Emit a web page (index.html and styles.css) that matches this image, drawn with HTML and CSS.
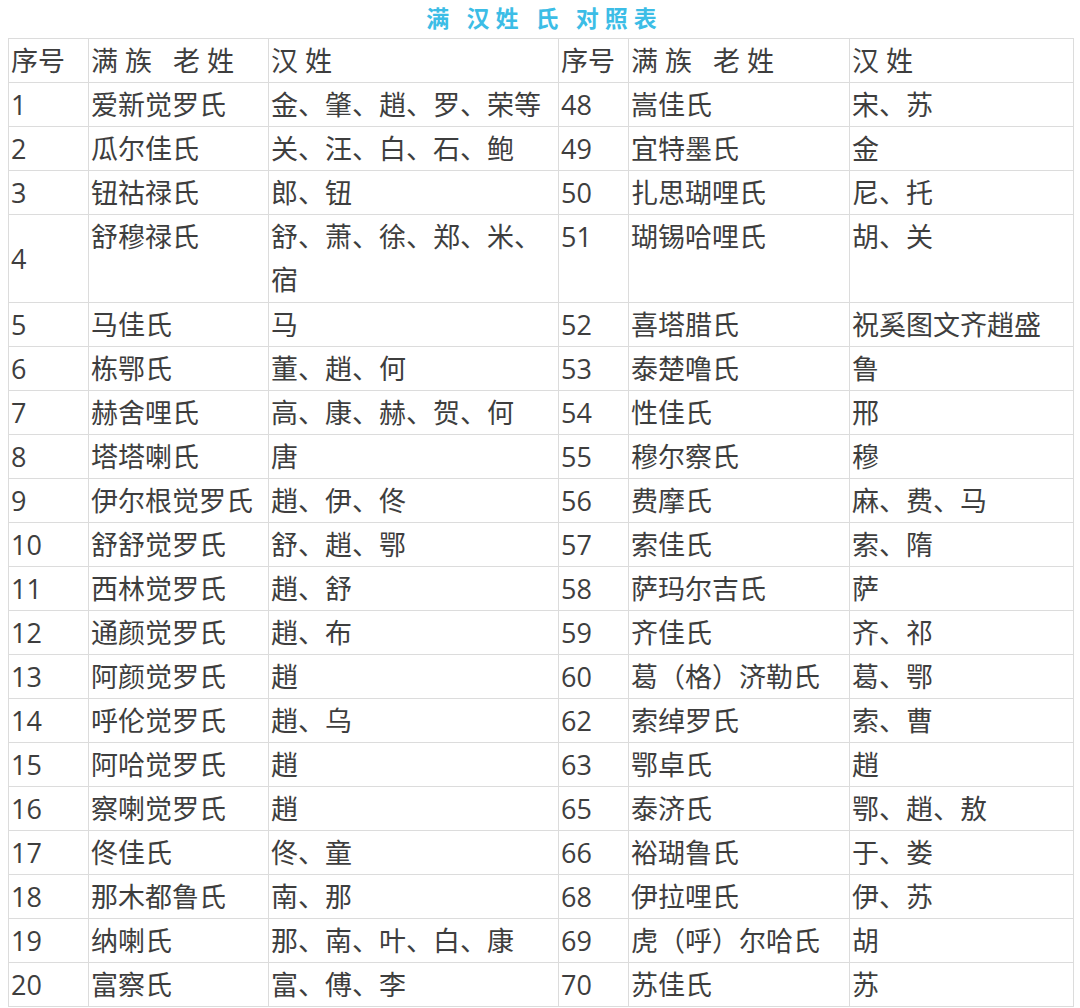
FILE: index.html
```html
<!DOCTYPE html>
<html lang="zh-CN">
<head>
<meta charset="utf-8">
<title>满汉姓氏对照表</title>
<link rel="stylesheet" href="styles.css">
</head>
<body>
<div class="page">
  <div class="title">满 汉姓 氏 对照表</div>
  <table class="grid">
    <colgroup>
      <col class="w1"><col class="w2"><col class="w3"><col class="w4"><col class="w5"><col class="w6">
    </colgroup>
    <tbody>
      <tr><td class="n">序号</td><td>满&nbsp;族&nbsp;&nbsp;&nbsp;老&nbsp;姓</td><td>汉&nbsp;姓</td><td>序号</td><td>满&nbsp;族&nbsp;&nbsp;&nbsp;老&nbsp;姓</td><td>汉&nbsp;姓</td></tr>
      <tr><td class="n">1</td><td>爱新觉罗氏</td><td>金、肇、趙、罗、荣等</td><td>48</td><td>嵩佳氏</td><td>宋、苏</td></tr>
      <tr><td class="n">2</td><td>瓜尔佳氏</td><td>关、汪、白、石、鲍</td><td>49</td><td>宜特墨氏</td><td>金</td></tr>
      <tr><td class="n">3</td><td>钮祜禄氏</td><td>郎、钮</td><td>50</td><td>扎思瑚哩氏</td><td>尼、托</td></tr>
      <tr class="tall"><td class="n">4</td><td>舒穆禄氏</td><td>舒、萧、徐、郑、米、宿</td><td>51</td><td>瑚锡哈哩氏</td><td>胡、关</td></tr>
      <tr><td class="n">5</td><td>马佳氏</td><td>马</td><td>52</td><td>喜塔腊氏</td><td>祝奚图文齐趙盛</td></tr>
      <tr><td class="n">6</td><td>栋鄂氏</td><td>董、趙、何</td><td>53</td><td>泰楚噜氏</td><td>鲁</td></tr>
      <tr><td class="n">7</td><td>赫舍哩氏</td><td>高、康、赫、贺、何</td><td>54</td><td>性佳氏</td><td>邢</td></tr>
      <tr><td class="n">8</td><td>塔塔喇氏</td><td>唐</td><td>55</td><td>穆尔察氏</td><td>穆</td></tr>
      <tr><td class="n">9</td><td>伊尔根觉罗氏</td><td>趙、伊、佟</td><td>56</td><td>费摩氏</td><td>麻、费、马</td></tr>
      <tr><td class="n">10</td><td>舒舒觉罗氏</td><td>舒、趙、鄂</td><td>57</td><td>索佳氏</td><td>索、隋</td></tr>
      <tr><td class="n">11</td><td>西林觉罗氏</td><td>趙、舒</td><td>58</td><td>萨玛尔吉氏</td><td>萨</td></tr>
      <tr><td class="n">12</td><td>通颜觉罗氏</td><td>趙、布</td><td>59</td><td>齐佳氏</td><td>齐、祁</td></tr>
      <tr><td class="n">13</td><td>阿颜觉罗氏</td><td>趙</td><td>60</td><td>葛（格）济勒氏</td><td>葛、鄂</td></tr>
      <tr><td class="n">14</td><td>呼伦觉罗氏</td><td>趙、乌</td><td>62</td><td>索绰罗氏</td><td>索、曹</td></tr>
      <tr><td class="n">15</td><td>阿哈觉罗氏</td><td>趙</td><td>63</td><td>鄂卓氏</td><td>趙</td></tr>
      <tr><td class="n">16</td><td>察喇觉罗氏</td><td>趙</td><td>65</td><td>泰济氏</td><td>鄂、趙、敖</td></tr>
      <tr><td class="n">17</td><td>佟佳氏</td><td>佟、童</td><td>66</td><td>裕瑚鲁氏</td><td>于、娄</td></tr>
      <tr><td class="n">18</td><td>那木都鲁氏</td><td>南、那</td><td>68</td><td>伊拉哩氏</td><td>伊、苏</td></tr>
      <tr><td class="n">19</td><td>纳喇氏</td><td>那、南、叶、白、康</td><td>69</td><td>虎（呼）尔哈氏</td><td>胡</td></tr>
      <tr><td class="n">20</td><td>富察氏</td><td>富、傅、李</td><td>70</td><td>苏佳氏</td><td>苏</td></tr>
    </tbody>
  </table>
</div>
</body>
</html>
```

FILE: styles.css
```css
html, body {
  margin: 0;
  padding: 0;
  background: #ffffff;
}

.page {
  padding: 0 0 0 8px;
  width: 1065px;
}

.title {
  height: 38px;
  line-height: 35px;
  text-align: center;
  font-family: "Noto Sans CJK SC", sans-serif;
  font-size: 23px;
  font-weight: bold;
  letter-spacing: 6px;
  color: #3cbde6;
  padding-left: 8px;
}

.grid {
  border-collapse: collapse;
  table-layout: fixed;
  width: 1065px;
  font-family: "Open Sans", "Noto Sans CJK SC", sans-serif;
  font-size: 27px;
  color: #3e3e3e;
}

.w1 { width: 80px; }
.w2 { width: 180px; }
.w3 { width: 290px; }
.w4 { width: 70px; }
.w5 { width: 221px; }
.w6 { width: 224px; }

.grid td {
  border: 1px solid #dcdcdc;
  padding: 0 2px;
  line-height: 43px;
  vertical-align: top;
}

.grid tr.tall td {
  padding-bottom: 1px;
}

.grid td.n {
  vertical-align: middle;
}
```
